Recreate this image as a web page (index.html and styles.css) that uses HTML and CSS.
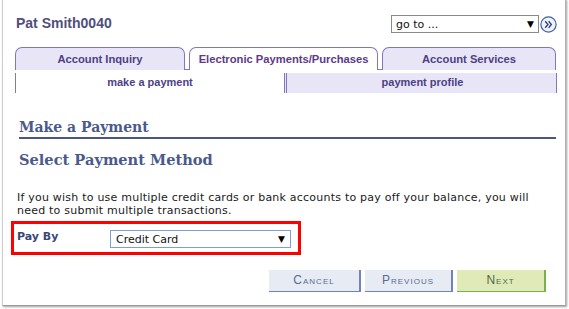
FILE: index.html
```html
<!DOCTYPE html>
<html>
<head>
<meta charset="utf-8">
<link rel="stylesheet" href="styles.css">
</head>
<body>
<div class="frame">
  <div class="header">
    <div class="name">Pat Smith0040</div>
    <div class="goto">
      <div class="goto-select"><span>go to ...</span><span class="arrow">&#9660;</span></div>
      <div class="goto-btn">
        <svg width="17" height="17" viewBox="0 0 17 17"><circle cx="8.5" cy="8.5" r="7.6" fill="#eef2fb" stroke="#3f5fa8" stroke-width="1.2"/><path d="M5.2 5.3 L8 8.5 L5.2 11.7 M8.6 5.3 L11.4 8.5 L8.6 11.7" fill="none" stroke="#2a3f80" stroke-width="1.3"/></svg>
      </div>
    </div>
  </div>
  <div class="tabs">
    <div class="tab t1">Account Inquiry</div>
    <div class="tab active t2">Electronic Payments/Purchases</div>
    <div class="tab t3">Account Services</div>
  </div>
  <div class="subtabs">
    <div class="sub sub-active">make a payment</div>
    <div class="sub sub-other">payment profile</div>
  </div>
  <div class="content">
    <h1 class="h-main">Make a Payment</h1>
    <h2 class="h-sub">Select Payment Method</h2>
    <p class="info">If you wish to use multiple credit cards or bank accounts to pay off your balance, you will need to submit multiple transactions.</p>
    <div class="payby">
      <span class="lbl">Pay By</span>
      <div class="sel"><span>Credit Card</span><span class="arrow">&#9660;</span></div>
    </div>
    <div class="buttons">
      <div class="btn">Cancel</div>
      <div class="btn">Previous</div>
      <div class="btn next">Next</div>
    </div>
  </div>
</div>
</body>
</html>
```
FILE: styles.css
```css
html, body { margin: 0; padding: 0; background: #ffffff; }
body { width: 569px; height: 309px; overflow: hidden; font-family: "Liberation Sans", Arial, sans-serif; }
.frame {
  box-sizing: border-box;
  margin-left: 2px;
  margin-top: -1px;
  width: 564px;
  height: 307px;
  border: 1px solid #cfcfcf;
  border-right-color: #b0b0b0;
  border-bottom-color: #9a9a9a;
  box-shadow: 1px 1px 2px #a0a0a0;
  background: #fff;
  padding: 0 9px 0 12px;
}
.header {
  display: flex;
  justify-content: space-between;
  align-items: flex-start;
  height: 47px;
}
.name {
  margin-top: 15px;
  margin-left: 1px;
  font-weight: bold;
  font-size: 14px;
  color: #4f4f7c;
}
.goto { display: flex; align-items: center; margin-top: 15px; margin-right: -1px; gap: 1px; }
.goto-select {
  box-sizing: border-box;
  width: 148px; height: 18px;
  border: 1px solid #8a8a8a;
  display: flex; justify-content: space-between; align-items: center;
  padding: 0 4px 0 4px;
  font-family: "DejaVu Sans", Verdana, sans-serif;
  font-size: 11px; color: #111;
}
.goto-select .arrow, .sel .arrow { font-size: 9px; color: #000; }
.goto-btn { width: 17px; height: 17px; }
.goto-btn svg { display: block; }
.tabs {
  display: flex;
  gap: 4px;
  height: 23px;
  border-bottom: 1px solid #8077c3;
  box-sizing: border-box;
}
.tab {
  box-sizing: border-box;
  height: 23px;
  border: 1px solid #8077c3;
  border-bottom: none;
  border-radius: 7px 7px 0 0;
  background: #e8e6f6;
  font-weight: bold;
  font-size: 11.2px;
  color: #4d3f86;
  text-align: center;
  line-height: 23px;
}
.t1 { width: 171px; }
.t2 { width: 190px; }
.t3 { width: 175px; }
.tab.active {
  background: #fff;
  height: 23px;
  margin-bottom: -1px;
  color: #5d3a8a;
}
.subtabs {
  display: flex;
  margin-top: 3px;
  height: 20px;
  width: 542px;
}
.sub {
  box-sizing: border-box;
  height: 20px;
  font-weight: bold;
  font-size: 11px;
  color: #4d3f86;
  text-align: center;
  line-height: 19px;
}
.sub-active {
  width: 269px;
  border-left: 1px solid #8077c3;
  background: #fff;
}
.sub-other {
  flex: 1;
  border-left: 3px double #8077c3;
  border-right: 1px solid #8077c3;
  background: #e8e6f6;
  padding-left: 2px;
}
.content { padding-left: 4px; }
.h-main {
  margin: 25px 0 0 0;
  font-family: "DejaVu Serif", Georgia, serif;
  font-weight: bold;
  font-size: 14px;
  color: #4a5a8a;
  padding-bottom: 1px;
  border-bottom: 2px solid #4a5580;
  line-height: 18px;
}
.h-sub {
  margin: 10px 0 0 0;
  font-family: "DejaVu Serif", Georgia, serif;
  font-weight: bold;
  font-size: 14.6px;
  color: #4a5a8a;
  line-height: 22px;
}
.info {
  margin: 20px 0 0 -2px;
  font-family: "DejaVu Sans", Verdana, sans-serif;
  font-size: 11px;
  letter-spacing: 0.22px;
  line-height: 13px;
  color: #1a1a1a;
  width: 530px;
}
.payby {
  box-sizing: border-box;
  display: flex;
  align-items: center;
  margin: 4px 0 0 -8px;
  width: 290px;
  height: 34px;
  border: 3px solid #ff0000;
  padding-left: 3px;
}
.lbl {
  width: 93px;
  font-family: "DejaVu Sans", Verdana, sans-serif;
  font-weight: bold;
  font-size: 11px;
  color: #3b4676;
  margin-top: -3px;
}
.sel {
  box-sizing: border-box;
  width: 181px; height: 18px;
  border: 1px solid #7f9ed6;
  display: flex; justify-content: space-between; align-items: center;
  padding: 0 5px 0 5px;
  font-family: "DejaVu Sans", Verdana, sans-serif;
  font-size: 11px; color: #111;
  margin-top: 2px;
}
.buttons {
  display: flex;
  justify-content: flex-end;
  gap: 4px;
  margin-top: 15px;
  margin-right: 10px;
}
.btn {
  box-sizing: border-box;
  width: 92px;
  height: 22px;
  background: #e6ebf4;
  border-right: 2px solid #7283bb;
  border-bottom: 1px solid #7283bb;
  font-variant: small-caps;
  font-size: 12px;
  letter-spacing: 1px;
  color: #5c6b8f;
  text-align: center;
  line-height: 21px;
}
.btn:nth-child(2) { width: 88px; }
.btn.next {
  width: 89px;
  background: #e0eab8;
  border-right-color: #76b24a;
  border-bottom-color: #76b24a;
  color: #4f6a3f;
}
```
